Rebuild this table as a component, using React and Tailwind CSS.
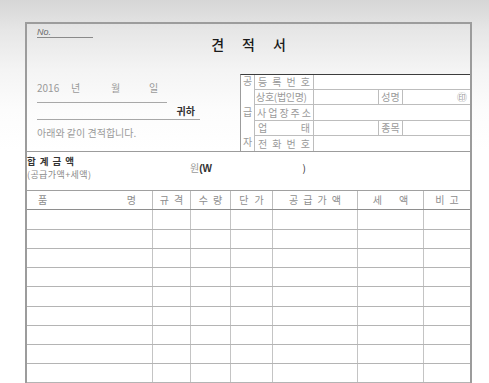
const ROWS = [20, 19, 19, 19, 20, 19, 19, 19, 19, 19];

function Spread({ text, className = '' }) {
  return (
    <div className={`flex justify-between ${className}`}>
      {text.split('').map((c, i) => (
        <span key={i}>{c}</span>
      ))}
    </div>
  );
}

function Head({ text, gap }) {
  return (
    <div className={`border-l border-[#bdbdbd] flex items-center justify-center ${gap}`}>
      {text.split('').map((c, i) => (
        <span key={i}>{c}</span>
      ))}
    </div>
  );
}

function SupplierRow({ label, height, last, split, seal }) {
  return (
    <div className={`flex ${height} ${last ? '' : 'border-b border-[#bdbdbd]'}`}>
      <div className="w-[59px] border-r border-[#bdbdbd] flex items-center">
        {label}
      </div>
      {split ? (
        <>
          <div className="w-[65px] border-r border-[#bdbdbd]" />
          <div className="w-[24px] border-r border-[#bdbdbd] flex items-center justify-center">{split}</div>
          <div className="flex-1 flex items-center justify-end pr-[3px]">{seal && <span>㊞</span>}</div>
        </>
      ) : (
        <div className="flex-1" />
      )}
    </div>
  );
}

export default function App() {
  return (
    <div className="w-[489px] h-[383px] overflow-hidden pt-[22px] pl-[25px] font-['Noto_Sans_CJK_KR',sans-serif] bg-[linear-gradient(180deg,#d6d6d6_0px,#e6e6e6_30px,#f4f4f4_70px,#fcfcfc_110px,#ffffff_150px)]">
      <div className="w-[447px] border-t-2 border-l-2 border-r-2 border-[#9c9c9c]">
        {/* title */}
        <div className="h-[50px] flex flex-col">
          <div className="ml-[10px] mt-[3px] w-[56px] h-[11px] border-b border-[#8a8a8a] text-[9px] leading-[10px] italic text-[#6a6a6a] font-['Liberation_Sans',sans-serif]">
            No.
          </div>
          <div className="-mt-[2px] flex justify-center gap-[18px] text-[14px] leading-[16px] font-medium text-[#1a1a1a]">
            <span>견</span>
            <span>적</span>
            <span>서</span>
          </div>
        </div>

        {/* customer + supplier */}
        <div className="flex">
          <div className="w-[213px] pl-[10px] text-[10px] leading-[12px] text-[#9a9a9a]">
            <div className="mt-[8px] w-[130px] h-[21px] border-b border-[#a8a8a8] flex">
              <span className="w-[34px]">2016</span>
              <span className="w-[40px]">년</span>
              <span className="w-[38px]">월</span>
              <span>일</span>
            </div>
            <div className="w-[163px] h-[17px] border-b border-[#a8a8a8] flex items-center justify-end pr-[5px] text-[#333] font-semibold">
              귀하
            </div>
            <div className="mt-[7px]">아래와 같이 견적합니다.</div>
          </div>

          <div className="flex-1 flex border-t border-l border-t-[#3c3c3c] border-l-[#9c9c9c] bg-white text-[10px] leading-[12px] text-[#9a9a9a]">
            <div className="w-[14px] border-r border-[#bdbdbd] flex flex-col justify-between items-center pb-[3px]">
              <span>공</span>
              <span>급</span>
              <span>자</span>
            </div>
            <div className="flex-1 flex flex-col">
              <SupplierRow height="h-[15px]" label={<Spread text="등록번호" className="w-full px-[3px]" />} />
              <SupplierRow height="h-[15px]" label={<span className="pl-[1px] tracking-[-0.3px]">상호(법인명)</span>} split="성명" seal />
              <SupplierRow height="h-[16px]" label={<Spread text="사업장주소" className="w-full px-[2px]" />} />
              <SupplierRow height="h-[15px]" label={<Spread text="업태" className="w-full px-[3px]" />} split="종목" />
              <SupplierRow height="h-[15px]" last label={<Spread text="전화번호" className="w-full px-[3px]" />} />
            </div>
          </div>
        </div>

        {/* total */}
        <div className="h-[39px] border-t border-[#9c9c9c] flex items-start pt-[3px]">
          <div className="w-[163px] flex flex-col">
            <div className="flex gap-[4px] text-[9.5px] leading-[13px] font-semibold text-[#333]">
              <span>합</span>
              <span>계</span>
              <span>금</span>
              <span>액</span>
            </div>
            <div className="text-[9px] leading-[13px] text-[#8a8a8a] tracking-[0.4px]">(공급가액+세액)</div>
          </div>
          <div className="mt-[7px] w-[116px] flex justify-between text-[10px] leading-[12px] text-[#333]">
            <span>
              <span className="text-[#9a9a9a]">원</span>
              <span className="font-bold font-['Liberation_Sans',sans-serif]">(W</span>
            </span>
            <span>)</span>
          </div>
        </div>

        {/* item table */}
        <div className="grid grid-cols-[125px_38px_40px_42px_85px_66px_47px] h-[20px] border-t border-b border-t-[#a0a0a0] border-b-[#8e8e8e] text-[10px] leading-[12px] text-[#8e8e8e]">
          <div className="flex items-center pl-[11px] pr-[16px]">
            <Spread text="품명" className="w-full" />
          </div>
          <Head text="규격" gap="gap-[5px]" />
          <Head text="수량" gap="gap-[5px]" />
          <Head text="단가" gap="gap-[6px]" />
          <Head text="공급가액" gap="gap-[5px]" />
          <Head text="세액" gap="gap-[17px]" />
          <Head text="비고" gap="gap-[5px]" />
        </div>
        {ROWS.map((h, i) => (
          <div
            key={i}
            className={`grid grid-cols-[125px_38px_40px_42px_85px_66px_47px] border-b border-[#b4b4b4] ${h === 20 ? 'h-[20px]' : 'h-[19px]'}`}
          >
            <div />
            <div className="border-l border-[#c4c4c4]" />
            <div className="border-l border-[#c4c4c4]" />
            <div className="border-l border-[#c4c4c4]" />
            <div className="border-l border-[#c4c4c4]" />
            <div className="border-l border-[#c4c4c4]" />
            <div className="border-l border-[#c4c4c4]" />
          </div>
        ))}
      </div>
    </div>
  );
}
